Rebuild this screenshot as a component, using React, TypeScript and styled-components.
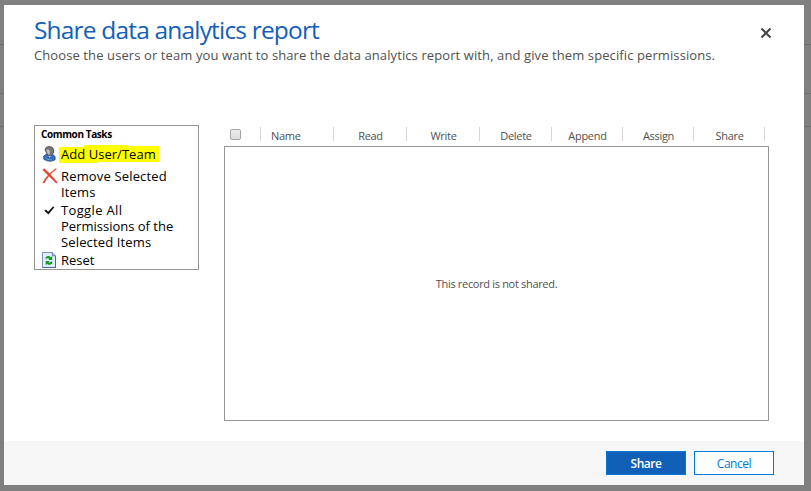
import React from "react";
import styled, { createGlobalStyle } from "styled-components";

const Global = createGlobalStyle`
  * { box-sizing: border-box; }
  body { margin: 0; font-family: "Segoe UI", "Open Sans", "Noto Sans", sans-serif; background: #808080; }
`;

const Backdrop = styled.div`
  width: 811px;
  height: 491px;
  padding: 5px 7px 6px 4px;
  overflow: hidden;
  background:
    linear-gradient(#6f6f6f, #6f6f6f) 0 44px / 100% 1px no-repeat,
    linear-gradient(#6f6f6f, #6f6f6f) 0 93px / 100% 1px no-repeat,
    linear-gradient(#6f6f6f, #6f6f6f) 0 126px / 100% 1px no-repeat,
    #808080;
`;

const Dialog = styled.section`
  width: 800px;
  height: 480px;
  display: flex;
  flex-direction: column;
  background: #fff;
`;

const Header = styled.header`
  display: flex;
  justify-content: space-between;
  height: 120px;
  padding: 8px 32px 0 30px;
`;

const Title = styled.h1`
  margin: 0;
  font-size: 24.5px;
  line-height: 34px;
  font-weight: 400;
  letter-spacing: -0.82px;
  color: #1160b7;
  white-space: nowrap;
`;

const Subtitle = styled.p`
  margin: 0;
  font-size: 13px;
  line-height: 17px;
  letter-spacing: 0.1px;
  color: #505050;
  white-space: nowrap;
`;

const CloseButton = styled.button`
  width: 12px;
  height: 12px;
  margin-top: 14px;
  padding: 0;
  border: 0;
  background: none;
  svg { display: block; }
`;

const Body = styled.div`
  display: flex;
  flex: 1;
  align-items: flex-start;
  gap: 25px;
  padding-left: 30px;
`;

const Tasks = styled.nav`
  width: 165px;
  height: 145px;
  border: 1px solid #969696;
  padding: 0 6px;
`;

const TasksTitle = styled.h2`
  margin: 0;
  height: 20px;
  font-size: 10px;
  line-height: 16px;
  letter-spacing: -0.4px;
  color: #000;
`;

const Task = styled.div<{ $gap: number }>`
  display: grid;
  grid-template-columns: 20px 1fr;
  justify-items: start;
  margin-bottom: ${(p) => p.$gap}px;
  svg { display: block; margin-left: 1px; }
`;

const TaskLabel = styled.span<{ $spacing?: number }>`
  display: block;
  font-size: 13px;
  line-height: 16px;
  letter-spacing: ${(p) => p.$spacing ?? 0}px;
  color: #000;
  white-space: nowrap;
`;

const Highlight = styled.span`
  display: block;
  height: 18px;
  margin: -1px 0 -1px -2px;
  padding: 1px 3px 1px 2px;
  background:
    linear-gradient(#ff0, #ff0) 0 2px / 38px 16px no-repeat,
    linear-gradient(#ff0, #ff0) 25px 0 / 44px 17px no-repeat,
    linear-gradient(#ff0, #ff0) 65px 1px / 35px 16px no-repeat;
`;

const Grid = styled.div`
  width: 545px;
`;

const GridHead = styled.div`
  display: flex;
  height: 21px;
`;

const Column = styled.div<{ $width: number; $left?: number }>`
  width: ${(p) => p.$width}px;
  height: 14px;
  margin-top: 2px;
  padding-left: ${(p) => p.$left ?? 1}px;
  border-right: 1px solid #d6d6d6;
  text-align: ${(p) => (p.$left ? "left" : "center")};
  font-size: 11px;
  line-height: 18px;
  letter-spacing: -0.3px;
  color: #505050;
  white-space: nowrap;
`;

const CheckBox = styled.span`
  display: block;
  width: 11px;
  height: 11px;
  margin-top: 2px;
  border: 1px solid #a5a5a5;
  border-radius: 2px;
  background: linear-gradient(#ededed, #dcdcdc);
`;

const Records = styled.div`
  height: 275px;
  display: flex;
  align-items: center;
  justify-content: center;
  border: 1px solid #969696;
  font-size: 11px;
  letter-spacing: -0.32px;
  color: #505050;
`;

const Footer = styled.footer`
  display: flex;
  justify-content: flex-end;
  gap: 8px;
  height: 44px;
  padding: 10px 30px 0 0;
  background: #f7f7f7;
`;

const Button = styled.button<{ $primary?: boolean }>`
  width: 80px;
  height: 24px;
  padding: 1px 0 0;
  border: 1px solid #0078d7;
  background: ${(p) => (p.$primary ? "#1160b7" : "#fff")};
  color: ${(p) => (p.$primary ? "#fff" : "#0078d7")};
  font: ${(p) => (p.$primary ? 600 : 400)} 12px/21px "Segoe UI", "Open Sans", "Noto Sans", sans-serif;
  letter-spacing: -0.45px;
`;

const UserIcon = () => (
  <svg width="15" height="16" viewBox="0 0 15 16">
    <path d="M1.5 10.3 4.5 8h5.8l2.8 2.6v3.2q-5.5 3.2-11.2-.5z" fill="#326fba" stroke="#204d87" strokeWidth=".8" />
    <path d="m5.5 8.5 2.3 3.2 1.7-3.2z" fill="#c8dff5" />
    <path d="M3 4Q3.2.5 7.2.5T11.8 4 9.5 9 5.5 8.7 3 4z" fill="#777" stroke="#4c4c4c" strokeWidth=".8" />
    <path d="M4.3 3.8Q6.8 3 7.5 4.5T7.5 8.3 5 6z" fill="#c2c2c2" />
    <path d="m3.4 11.2 2.4 2.4h3.8" fill="none" stroke="#6ba4df" />
  </svg>
);
const RemoveIcon = () => (
  <svg width="16" height="16" viewBox="0 0 16 16">
    <path d="M.3 1.7 2.4.4Q8 5.2 15.6 14.4l-1.3 1Q7.4 8.8.3 1.7z" fill="#df4b32" />
    <path d="M14.8 1.1Q7 6.5 2.4 15.3L.4 14.9Q5.4 6 13.9.3z" fill="#df4b32" />
  </svg>
);
const CheckIcon = () => (
  <svg width="15" height="16" viewBox="0 0 15 16">
    <path d="m2.3 8.8 1.7-1.2 2.1 2.1 4.9-5.2 1.4.8-6 7.3z" fill="#111" />
  </svg>
);
const ResetIcon = () => (
  <svg width="15" height="16" viewBox="0 0 15 16">
    <path d="M.5.5h9.8l3.2 3.2v11.8H.5z" fill="#e0ecff" stroke="#7f93b9" />
    <path d="M13.5 4v11.5H.5" fill="none" stroke="#4e658f" />
    <path d="M10.3.5v3.2h3.2" fill="#b4c9ef" stroke="#6680b0" />
    <path d="M3.6 7V5.2Q6.5 2.8 8.9 5.2l1.3-1.1V8H6.3l1.2-1.1Q6 5.6 3.6 7zM10.2 9v2.5q-2.4 2.5-5 .4l-1.5 1.2V9h4l-1.3 1.3q1.6.6 3.8-1.3z" fill="#129b1f" />
  </svg>
);

const permissions = [
  { name: "Read", width: 73 },
  { name: "Write", width: 73 },
  { name: "Delete", width: 72 },
  { name: "Append", width: 71 },
  { name: "Assign", width: 71 },
  { name: "Share", width: 71 },
];

export default function App() {
  return (
    <Backdrop>
      <Global />
      <Dialog>
        <Header>
          <div>
            <Title>Share data analytics report</Title>
            <Subtitle>Choose the users or team you want to share the data analytics report with, and give them specific permissions.</Subtitle>
          </div>
          <CloseButton aria-label="Close">
            <svg width="12" height="12" viewBox="0 0 12 12">
              <path d="m1.5 1.5 9 9m0-9-9 9" stroke="#444" strokeWidth="2" fill="none" />
            </svg>
          </CloseButton>
        </Header>
        <Body>
          <Tasks>
            <TasksTitle>Common Tasks</TasksTitle>
            <Task $gap={6}><UserIcon /><Highlight><TaskLabel $spacing={0.04}>Add User/Team</TaskLabel></Highlight></Task>
            <Task $gap={2}><RemoveIcon /><TaskLabel $spacing={0.16}>Remove Selected<br />Items</TaskLabel></Task>
            <Task $gap={2}>
              <CheckIcon />
              <div>
                <TaskLabel $spacing={0.35}>Toggle All</TaskLabel>
                <TaskLabel>Permissions of the</TaskLabel>
                <TaskLabel $spacing={0.14}>Selected Items</TaskLabel>
              </div>
            </Task>
            <Task $gap={0}><ResetIcon /><TaskLabel>Reset</TaskLabel></Task>
          </Tasks>
          <Grid>
            <GridHead>
              <Column $width={37} $left={6}><CheckBox /></Column>
              <Column $width={73} $left={10}>Name</Column>
              {permissions.map((p) => <Column key={p.name} $width={p.width}>{p.name}</Column>)}
            </GridHead>
            <Records>This record is not shared.</Records>
          </Grid>
        </Body>
        <Footer>
          <Button $primary>Share</Button>
          <Button>Cancel</Button>
        </Footer>
      </Dialog>
    </Backdrop>
  );
}
